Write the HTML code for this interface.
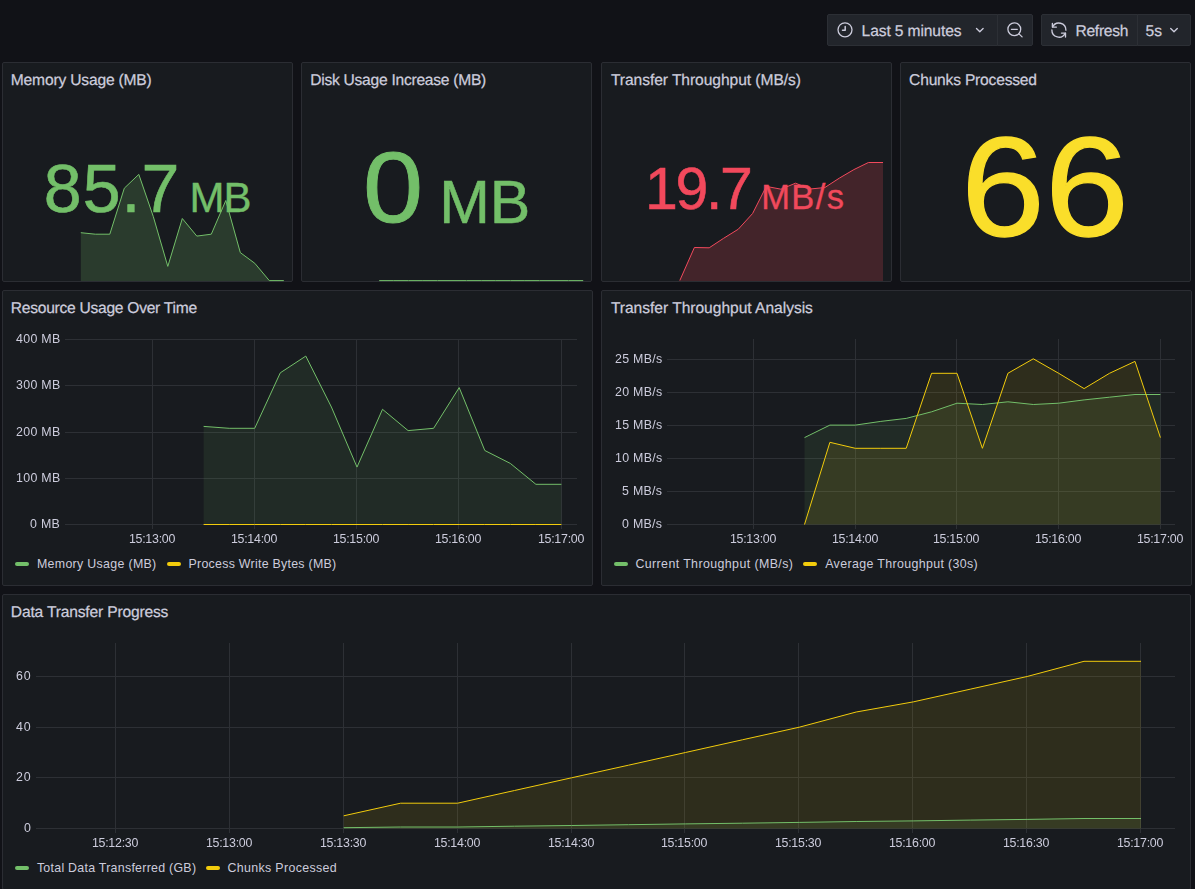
<!DOCTYPE html>
<html><head><meta charset="utf-8"><title>Data Transfer Dashboard</title>
<style>
html,body{margin:0;padding:0;}
body{width:1195px;height:889px;overflow:hidden;background:#111217;font-family:"Liberation Sans", sans-serif;position:relative;}
.p{position:absolute;box-sizing:border-box;background:#181b1f;border:1px solid #2b2d33;border-radius:2px;}
.t{position:absolute;white-space:nowrap;line-height:normal;}
.b{position:absolute;box-sizing:border-box;background:#22252b;border:1px solid #2c2f35;height:32px;top:14px;}
svg{position:absolute;left:0;top:0;}
.lg{position:absolute;height:4px;width:14px;border-radius:2px;}
</style></head><body>
<div class="p" style="left:2px;top:62px;width:291px;height:220px"></div>
<div class="p" style="left:301px;top:62px;width:291px;height:220px"></div>
<div class="p" style="left:601px;top:62px;width:291px;height:220px"></div>
<div class="p" style="left:900px;top:62px;width:291px;height:220px"></div>
<div class="p" style="left:2px;top:290px;width:591px;height:296px"></div>
<div class="p" style="left:601px;top:290px;width:591px;height:296px"></div>
<div class="p" style="left:2px;top:594px;width:1189px;height:296px"></div>
<div class="b" style="left:827px;width:171px;border-radius:2px 0 0 2px"></div>
<div class="b" style="left:997px;width:36px;border-radius:0 2px 2px 0"></div>
<div class="b" style="left:1041px;width:97px;border-radius:2px 0 0 2px"></div>
<div class="b" style="left:1137px;width:54px;border-radius:0 2px 2px 0"></div>
<div class="t" id="s1" style="top:148.5px;font-size:68.1px;color:#73bf69;left:43.8px;-webkit-text-stroke:0.6px currentColor;letter-spacing:1.0px;">85.7</div>
<div class="t" id="s1u" style="top:173.5px;font-size:42.0px;color:#73bf69;left:189.4px;-webkit-text-stroke:0.4px currentColor;letter-spacing:-1.0px;">MB</div>
<div class="t" id="s2" style="top:130px;font-size:100.6px;color:#73bf69;left:363.2px;-webkit-text-stroke:0.9px currentColor;transform-origin:0 0;transform:scaleX(1.075);">0</div>
<div class="t" id="s2u" style="top:166.7px;font-size:60.8px;color:#73bf69;left:439.3px;-webkit-text-stroke:0.55px currentColor;letter-spacing:-0.3px;">MB</div>
<div class="t" id="s3" style="top:155.1px;font-size:59.0px;color:#f2495c;left:644.9px;-webkit-text-stroke:0.55px currentColor;letter-spacing:-2.3px;">19.7</div>
<div class="t" id="s3u" style="top:178px;font-size:34.5px;color:#f2495c;left:761.2px;-webkit-text-stroke:0.3px currentColor;letter-spacing:1.4px;">MB/s</div>
<div class="t" id="s4" style="top:106px;font-size:141.3px;color:#fade2a;left:960.8px;-webkit-text-stroke:1.3px currentColor;transform-origin:0 0;transform:scaleX(1.068);">66</div>
<svg width="1195" height="889" viewBox="0 0 1195 889">
<polygon points="80.8,281.0 80.8,232.7 95.3,234.2 109.8,234.2 124.3,188.2 138.8,174.4 153.3,216.6 167.8,266.4 182.3,218.5 196.8,236.1 211.3,234.2 225.8,200.5 240.3,252.6 254.8,263.3 269.3,280.6 283.8,280.6 283.8,281.0" fill="#73bf69" fill-opacity="0.2"/>
<polyline points="80.8,232.7 95.3,234.2 109.8,234.2 124.3,188.2 138.8,174.4 153.3,216.6 167.8,266.4 182.3,218.5 196.8,236.1 211.3,234.2 225.8,200.5 240.3,252.6 254.8,263.3 269.3,280.6 283.8,280.6" fill="none" stroke="#73bf69" stroke-width="1" stroke-linejoin="round"/>
<polyline points="379.2,280.6 393.8,280.6 408.3,280.6 422.9,280.6 437.5,280.6 452.0,280.6 466.6,280.6 481.2,280.6 495.8,280.6 510.3,280.6 524.9,280.6 539.5,280.6 554.0,280.6 568.6,280.6 583.2,280.6" fill="none" stroke="#73bf69" stroke-width="1" stroke-linejoin="round"/>
<polygon points="679.8,281.0 679.8,280.5 694.4,247.5 709.2,247.8 723.6,238.3 738.3,229.2 752.6,213.5 766.3,186.4 781.0,189.2 795.5,183.2 810.2,189.0 824.9,187.5 839.4,178.1 853.9,169.6 868.4,162.5 883.0,162.5 883.0,281.0" fill="#f2495c" fill-opacity="0.2"/>
<polyline points="679.8,280.5 694.4,247.5 709.2,247.8 723.6,238.3 738.3,229.2 752.6,213.5 766.3,186.4 781.0,189.2 795.5,183.2 810.2,189.0 824.9,187.5 839.4,178.1 853.9,169.6 868.4,162.5 883.0,162.5" fill="none" stroke="#f2495c" stroke-width="1" stroke-linejoin="round"/>
<rect x="65" y="339" width="512" height="1" fill="#2d3035"/>
<rect x="65" y="385" width="512" height="1" fill="#2d3035"/>
<rect x="65" y="432" width="512" height="1" fill="#2d3035"/>
<rect x="65" y="478" width="512" height="1" fill="#2d3035"/>
<rect x="65" y="524" width="512" height="1" fill="#2d3035"/>
<rect x="152" y="339" width="1" height="190" fill="#2d3035"/>
<rect x="254" y="339" width="1" height="190" fill="#2d3035"/>
<rect x="356" y="339" width="1" height="190" fill="#2d3035"/>
<rect x="458" y="339" width="1" height="190" fill="#2d3035"/>
<rect x="561" y="339" width="1" height="190" fill="#2d3035"/>
<polygon points="203.6,524.5 203.6,426.4 229.2,428.3 254.7,428.3 280.3,372.8 305.8,356.1 331.4,407.0 357.0,467.1 382.5,409.3 408.1,430.6 433.6,428.3 459.2,387.6 484.8,450.5 510.3,463.4 535.9,484.3 561.4,484.3 561.4,524.5" fill="#73bf69" fill-opacity="0.1"/>
<polyline points="203.6,426.4 229.2,428.3 254.7,428.3 280.3,372.8 305.8,356.1 331.4,407.0 357.0,467.1 382.5,409.3 408.1,430.6 433.6,428.3 459.2,387.6 484.8,450.5 510.3,463.4 535.9,484.3 561.4,484.3" fill="none" stroke="#73bf69" stroke-width="1" stroke-linejoin="round"/>
<polyline points="203.6,524.5 229.2,524.5 254.7,524.5 280.3,524.5 305.8,524.5 331.4,524.5 357.0,524.5 382.5,524.5 408.1,524.5 433.6,524.5 459.2,524.5 484.8,524.5 510.3,524.5 535.9,524.5 561.4,524.5" fill="none" stroke="#f2cc0c" stroke-width="1" stroke-linejoin="round"/>
<rect x="667" y="359" width="508" height="1" fill="#2d3035"/>
<rect x="667" y="392" width="508" height="1" fill="#2d3035"/>
<rect x="667" y="425" width="508" height="1" fill="#2d3035"/>
<rect x="667" y="458" width="508" height="1" fill="#2d3035"/>
<rect x="667" y="491" width="508" height="1" fill="#2d3035"/>
<rect x="667" y="524" width="508" height="1" fill="#2d3035"/>
<rect x="753" y="339" width="1" height="190" fill="#2d3035"/>
<rect x="855" y="339" width="1" height="190" fill="#2d3035"/>
<rect x="956" y="339" width="1" height="190" fill="#2d3035"/>
<rect x="1058" y="339" width="1" height="190" fill="#2d3035"/>
<rect x="1160" y="339" width="1" height="190" fill="#2d3035"/>
<polygon points="804.5,524.5 804.5,437.6 829.9,425.1 855.3,425.1 880.8,421.4 906.2,418.4 931.6,411.8 957.0,403.2 982.4,404.5 1007.9,401.8 1033.3,404.5 1058.7,403.2 1084.1,399.9 1109.5,397.2 1135.0,394.5 1160.4,394.5 1160.4,524.5" fill="#73bf69" fill-opacity="0.1"/>
<polygon points="804.5,524.5 804.5,524.5 829.9,442.3 855.3,448.3 880.8,448.3 906.2,448.3 931.6,373.3 957.0,373.3 982.4,448.3 1007.9,373.3 1033.3,358.8 1058.7,373.3 1084.1,388.6 1109.5,373.3 1135.0,361.4 1160.4,437.6 1160.4,524.5" fill="#f2cc0c" fill-opacity="0.1"/>
<polyline points="804.5,437.6 829.9,425.1 855.3,425.1 880.8,421.4 906.2,418.4 931.6,411.8 957.0,403.2 982.4,404.5 1007.9,401.8 1033.3,404.5 1058.7,403.2 1084.1,399.9 1109.5,397.2 1135.0,394.5 1160.4,394.5" fill="none" stroke="#73bf69" stroke-width="1" stroke-linejoin="round"/>
<polyline points="804.5,524.5 829.9,442.3 855.3,448.3 880.8,448.3 906.2,448.3 931.6,373.3 957.0,373.3 982.4,448.3 1007.9,373.3 1033.3,358.8 1058.7,373.3 1084.1,388.6 1109.5,373.3 1135.0,361.4 1160.4,437.6" fill="none" stroke="#f2cc0c" stroke-width="1" stroke-linejoin="round"/>
<rect x="36" y="676" width="1139" height="1" fill="#2d3035"/>
<rect x="36" y="727" width="1139" height="1" fill="#2d3035"/>
<rect x="36" y="777" width="1139" height="1" fill="#2d3035"/>
<rect x="36" y="828" width="1139" height="1" fill="#2d3035"/>
<rect x="115" y="643" width="1" height="190" fill="#2d3035"/>
<rect x="229" y="643" width="1" height="190" fill="#2d3035"/>
<rect x="343" y="643" width="1" height="190" fill="#2d3035"/>
<rect x="457" y="643" width="1" height="190" fill="#2d3035"/>
<rect x="571" y="643" width="1" height="190" fill="#2d3035"/>
<rect x="684" y="643" width="1" height="190" fill="#2d3035"/>
<rect x="798" y="643" width="1" height="190" fill="#2d3035"/>
<rect x="912" y="643" width="1" height="190" fill="#2d3035"/>
<rect x="1026" y="643" width="1" height="190" fill="#2d3035"/>
<rect x="1140" y="643" width="1" height="190" fill="#2d3035"/>
<polygon points="343.7,828.5 343.7,827.7 400.6,827.0 457.6,827.0 514.5,826.2 571.5,825.5 628.5,824.7 685.4,823.9 742.4,823.2 799.3,822.4 856.2,821.5 913.2,820.9 970.2,820.1 1027.1,819.4 1084.0,818.5 1141.0,818.5 1141.0,828.5" fill="#73bf69" fill-opacity="0.1"/>
<polygon points="343.7,828.5 343.7,815.8 400.6,803.2 457.6,803.2 514.5,790.5 571.5,777.8 628.5,765.2 685.4,752.5 742.4,739.8 799.3,727.2 856.2,712.0 913.2,701.9 970.2,689.2 1027.1,676.5 1084.0,661.3 1141.0,661.3 1141.0,828.5" fill="#f2cc0c" fill-opacity="0.1"/>
<polyline points="343.7,827.7 400.6,827.0 457.6,827.0 514.5,826.2 571.5,825.5 628.5,824.7 685.4,823.9 742.4,823.2 799.3,822.4 856.2,821.5 913.2,820.9 970.2,820.1 1027.1,819.4 1084.0,818.5 1141.0,818.5" fill="none" stroke="#73bf69" stroke-width="1" stroke-linejoin="round"/>
<polyline points="343.7,815.8 400.6,803.2 457.6,803.2 514.5,790.5 571.5,777.8 628.5,765.2 685.4,752.5 742.4,739.8 799.3,727.2 856.2,712.0 913.2,701.9 970.2,689.2 1027.1,676.5 1084.0,661.3 1141.0,661.3" fill="none" stroke="#f2cc0c" stroke-width="1" stroke-linejoin="round"/>
<g fill="none" stroke="#ccccdc" stroke-linecap="round" stroke-linejoin="round"><circle cx="845" cy="29.8" r="7" stroke-width="1.3"/><path d="M845.2 26.4 V30.3 H842.5" stroke-width="1.5"/></g>
<path d="M976.5 28.5 L979.8 31.8 L983.0999999999999 28.5" fill="none" stroke="#ccccdc" stroke-width="1.35" stroke-linecap="round" stroke-linejoin="round"/>
<path d="M1170.7 28.5 L1174 31.8 L1177.3 28.5" fill="none" stroke="#ccccdc" stroke-width="1.35" stroke-linecap="round" stroke-linejoin="round"/>
<g fill="none" stroke="#ccccdc" stroke-width="1.3" stroke-linecap="round"><circle cx="1014.3" cy="29.2" r="6.4"/><path d="M1019 33.9 L1022.1 36.9"/><path d="M1011.4 29.3 H1017.3"/></g>
<g fill="none" stroke="#ccccdc" stroke-width="1.35" stroke-linecap="round" stroke-linejoin="round"><path d="M1052.6 27 A7 7 0 0 1 1065.9 30.2"/><path d="M1052.4 23.3 V27.1 H1056.4"/><path d="M1051.9 30 A7 7 0 0 0 1065.2 33.2"/><path d="M1065.5 37 V33.1 H1061.5"/></g>
</svg>
<div class="t" id="t1" style="top:72px;font-size:15.6px;color:#ccccdc;letter-spacing:-0.179px;left:10.8px;-webkit-text-stroke:0.25px currentColor;text-rendering:geometricPrecision;">Memory Usage (MB)</div>
<div class="t" id="t2" style="top:72px;font-size:15.6px;color:#ccccdc;letter-spacing:-0.257px;left:310.2px;-webkit-text-stroke:0.25px currentColor;text-rendering:geometricPrecision;">Disk Usage Increase (MB)</div>
<div class="t" id="t3" style="top:72px;font-size:15.6px;color:#ccccdc;letter-spacing:-0.059px;left:610.9px;-webkit-text-stroke:0.25px currentColor;text-rendering:geometricPrecision;">Transfer Throughput (MB/s)</div>
<div class="t" id="t4" style="top:72px;font-size:15.6px;color:#ccccdc;letter-spacing:-0.200px;left:909.0999999999999px;-webkit-text-stroke:0.25px currentColor;text-rendering:geometricPrecision;">Chunks Processed</div>
<div class="t" id="t5" style="top:300px;font-size:15.6px;color:#ccccdc;letter-spacing:-0.267px;left:10.8px;-webkit-text-stroke:0.25px currentColor;text-rendering:geometricPrecision;">Resource Usage Over Time</div>
<div class="t" id="t6" style="top:300px;font-size:15.6px;color:#ccccdc;letter-spacing:-0.030px;left:610.9px;-webkit-text-stroke:0.25px currentColor;text-rendering:geometricPrecision;">Transfer Throughput Analysis</div>
<div class="t" id="t7" style="top:604px;font-size:15.6px;color:#ccccdc;letter-spacing:-0.173px;left:10.8px;-webkit-text-stroke:0.25px currentColor;text-rendering:geometricPrecision;">Data Transfer Progress</div>
<div class="t" id="b1" style="top:22.5px;font-size:15.6px;color:#ccccdc;letter-spacing:-0.117px;left:861.6px;-webkit-text-stroke:0.25px currentColor;text-rendering:geometricPrecision;">Last 5 minutes</div>
<div class="t" id="b2" style="top:22.5px;font-size:15.6px;color:#ccccdc;letter-spacing:-0.258px;left:1075.4px;-webkit-text-stroke:0.25px currentColor;text-rendering:geometricPrecision;">Refresh</div>
<div class="t" id="b3" style="top:22.5px;font-size:15.6px;color:#ccccdc;letter-spacing:0.011px;left:1145.5px;-webkit-text-stroke:0.25px currentColor;text-rendering:geometricPrecision;">5s</div>
<div class="t" id="y1_0" style="top:331.9px;font-size:12.4px;color:#ccccdc;right:1134.4px;letter-spacing:0.3px;will-change:transform;">400 MB</div>
<div class="t" id="y1_1" style="top:377.9px;font-size:12.4px;color:#ccccdc;right:1134.4px;letter-spacing:0.3px;will-change:transform;">300 MB</div>
<div class="t" id="y1_2" style="top:424.9px;font-size:12.4px;color:#ccccdc;right:1134.4px;letter-spacing:0.3px;will-change:transform;">200 MB</div>
<div class="t" id="y1_3" style="top:470.9px;font-size:12.4px;color:#ccccdc;right:1134.4px;letter-spacing:0.3px;will-change:transform;">100 MB</div>
<div class="t" id="y1_4" style="top:516.9px;font-size:12.4px;color:#ccccdc;right:1134.4px;letter-spacing:0.3px;will-change:transform;">0 MB</div>
<div class="t" id="x1_0" style="top:532px;font-size:12.4px;color:#ccccdc;left:51.5px;width:200px;text-align:center;letter-spacing:-0.25px;will-change:transform;">15:13:00</div>
<div class="t" id="x1_1" style="top:532px;font-size:12.4px;color:#ccccdc;left:153.5px;width:200px;text-align:center;letter-spacing:-0.25px;will-change:transform;">15:14:00</div>
<div class="t" id="x1_2" style="top:532px;font-size:12.4px;color:#ccccdc;left:255.5px;width:200px;text-align:center;letter-spacing:-0.25px;will-change:transform;">15:15:00</div>
<div class="t" id="x1_3" style="top:532px;font-size:12.4px;color:#ccccdc;left:357.5px;width:200px;text-align:center;letter-spacing:-0.25px;will-change:transform;">15:16:00</div>
<div class="t" id="x1_4" style="top:532px;font-size:12.4px;color:#ccccdc;left:460.5px;width:200px;text-align:center;letter-spacing:-0.25px;will-change:transform;">15:17:00</div>
<div class="t" id="y2_0" style="top:351.9px;font-size:12.4px;color:#ccccdc;right:532.4000000000001px;letter-spacing:0.3px;will-change:transform;">25 MB/s</div>
<div class="t" id="y2_1" style="top:384.9px;font-size:12.4px;color:#ccccdc;right:532.4000000000001px;letter-spacing:0.3px;will-change:transform;">20 MB/s</div>
<div class="t" id="y2_2" style="top:417.9px;font-size:12.4px;color:#ccccdc;right:532.4000000000001px;letter-spacing:0.3px;will-change:transform;">15 MB/s</div>
<div class="t" id="y2_3" style="top:450.9px;font-size:12.4px;color:#ccccdc;right:532.4000000000001px;letter-spacing:0.3px;will-change:transform;">10 MB/s</div>
<div class="t" id="y2_4" style="top:483.9px;font-size:12.4px;color:#ccccdc;right:532.4000000000001px;letter-spacing:0.3px;will-change:transform;">5 MB/s</div>
<div class="t" id="y2_5" style="top:516.9px;font-size:12.4px;color:#ccccdc;right:532.4000000000001px;letter-spacing:0.3px;will-change:transform;">0 MB/s</div>
<div class="t" id="x2_0" style="top:532px;font-size:12.4px;color:#ccccdc;left:652.5px;width:200px;text-align:center;letter-spacing:-0.25px;will-change:transform;">15:13:00</div>
<div class="t" id="x2_1" style="top:532px;font-size:12.4px;color:#ccccdc;left:754.5px;width:200px;text-align:center;letter-spacing:-0.25px;will-change:transform;">15:14:00</div>
<div class="t" id="x2_2" style="top:532px;font-size:12.4px;color:#ccccdc;left:855.5px;width:200px;text-align:center;letter-spacing:-0.25px;will-change:transform;">15:15:00</div>
<div class="t" id="x2_3" style="top:532px;font-size:12.4px;color:#ccccdc;left:957.5px;width:200px;text-align:center;letter-spacing:-0.25px;will-change:transform;">15:16:00</div>
<div class="t" id="x2_4" style="top:532px;font-size:12.4px;color:#ccccdc;left:1059.5px;width:200px;text-align:center;letter-spacing:-0.25px;will-change:transform;">15:17:00</div>
<div class="t" id="y3_0" style="top:668.9px;font-size:12.4px;color:#ccccdc;right:1163.3px;letter-spacing:0.9px;will-change:transform;">60</div>
<div class="t" id="y3_1" style="top:719.9px;font-size:12.4px;color:#ccccdc;right:1163.3px;letter-spacing:0.9px;will-change:transform;">40</div>
<div class="t" id="y3_2" style="top:769.9px;font-size:12.4px;color:#ccccdc;right:1163.3px;letter-spacing:0.9px;will-change:transform;">20</div>
<div class="t" id="y3_3" style="top:820.9px;font-size:12.4px;color:#ccccdc;right:1163.3px;letter-spacing:0.9px;will-change:transform;">0</div>
<div class="t" id="x3_0" style="top:836px;font-size:12.4px;color:#ccccdc;left:14.5px;width:200px;text-align:center;letter-spacing:-0.25px;will-change:transform;">15:12:30</div>
<div class="t" id="x3_1" style="top:836px;font-size:12.4px;color:#ccccdc;left:128.5px;width:200px;text-align:center;letter-spacing:-0.25px;will-change:transform;">15:13:00</div>
<div class="t" id="x3_2" style="top:836px;font-size:12.4px;color:#ccccdc;left:242.5px;width:200px;text-align:center;letter-spacing:-0.25px;will-change:transform;">15:13:30</div>
<div class="t" id="x3_3" style="top:836px;font-size:12.4px;color:#ccccdc;left:356.5px;width:200px;text-align:center;letter-spacing:-0.25px;will-change:transform;">15:14:00</div>
<div class="t" id="x3_4" style="top:836px;font-size:12.4px;color:#ccccdc;left:470.5px;width:200px;text-align:center;letter-spacing:-0.25px;will-change:transform;">15:14:30</div>
<div class="t" id="x3_5" style="top:836px;font-size:12.4px;color:#ccccdc;left:583.5px;width:200px;text-align:center;letter-spacing:-0.25px;will-change:transform;">15:15:00</div>
<div class="t" id="x3_6" style="top:836px;font-size:12.4px;color:#ccccdc;left:697.5px;width:200px;text-align:center;letter-spacing:-0.25px;will-change:transform;">15:15:30</div>
<div class="t" id="x3_7" style="top:836px;font-size:12.4px;color:#ccccdc;left:811.5px;width:200px;text-align:center;letter-spacing:-0.25px;will-change:transform;">15:16:00</div>
<div class="t" id="x3_8" style="top:836px;font-size:12.4px;color:#ccccdc;left:925.5px;width:200px;text-align:center;letter-spacing:-0.25px;will-change:transform;">15:16:30</div>
<div class="t" id="x3_9" style="top:836px;font-size:12.4px;color:#ccccdc;left:1039.5px;width:200px;text-align:center;letter-spacing:-0.25px;will-change:transform;">15:17:00</div>
<div class="lg" style="left:15px;top:562px;background:#73bf69"></div>
<div class="t" id="l1a" style="top:557px;font-size:12.4px;color:#ccccdc;letter-spacing:0.317px;left:36.900000000000006px;">Memory Usage (MB)</div>
<div class="lg" style="left:167px;top:562px;background:#f2cc0c"></div>
<div class="t" id="l1b" style="top:557px;font-size:12.4px;color:#ccccdc;letter-spacing:0.262px;left:188.5px;">Process Write Bytes (MB)</div>
<div class="lg" style="left:614px;top:562px;background:#73bf69"></div>
<div class="t" id="l2a" style="top:557px;font-size:12.4px;color:#ccccdc;letter-spacing:0.402px;left:635.4000000000001px;">Current Throughput (MB/s)</div>
<div class="lg" style="left:803px;top:562px;background:#f2cc0c"></div>
<div class="t" id="l2b" style="top:557px;font-size:12.4px;color:#ccccdc;letter-spacing:0.363px;left:825.2px;">Average Throughput (30s)</div>
<div class="lg" style="left:15px;top:866px;background:#73bf69"></div>
<div class="t" id="l3a" style="top:861px;font-size:12.4px;color:#ccccdc;letter-spacing:0.267px;left:36.900000000000006px;">Total Data Transferred (GB)</div>
<div class="lg" style="left:206px;top:866px;background:#f2cc0c"></div>
<div class="t" id="l3b" style="top:861px;font-size:12.4px;color:#ccccdc;letter-spacing:0.332px;left:227.6px;">Chunks Processed</div>
</body></html>
